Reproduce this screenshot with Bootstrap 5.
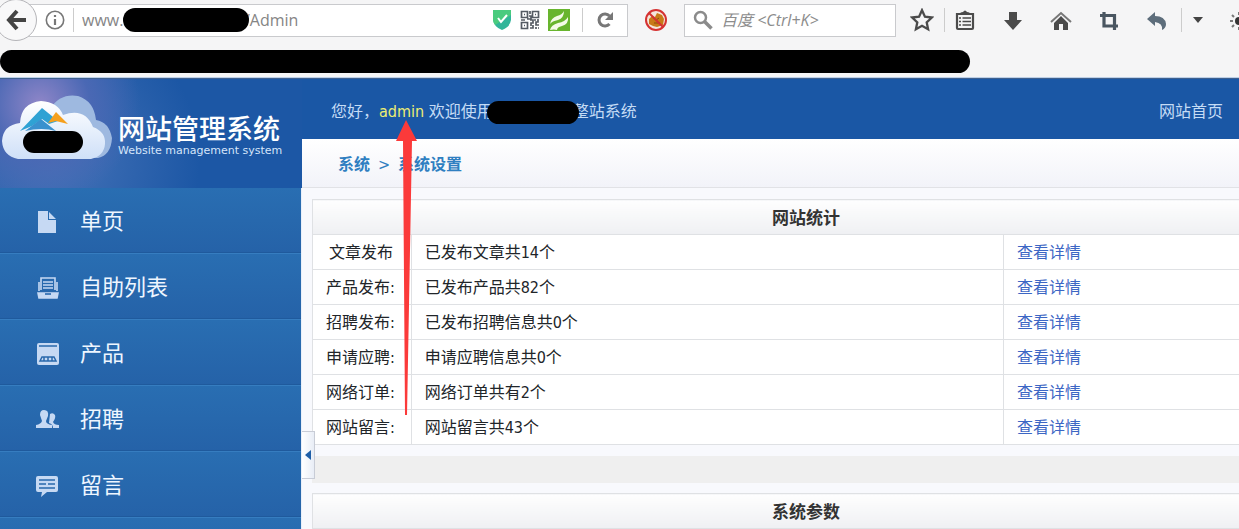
<!DOCTYPE html>
<html lang="zh-CN">
<head>
<meta charset="utf-8">
<meta name="viewport" content="width=device-width, initial-scale=1">
<title>网站管理系统</title>
<link href="https://cdn.jsdelivr.net/npm/bootstrap@5.3.0/dist/css/bootstrap.min.css" rel="stylesheet">
<style>
body{font:16px/24px "DejaVu Sans Condensed","Noto Sans CJK SC",sans-serif;color:#111;background:#f8f9fd}
button{background:none;border:0;padding:0}
.browser{background:#f5f5f6;height:79px;border-bottom:1px solid #3f608e;box-shadow:inset 0 -1px #bdd0e8;font-family:"Open Sans","Noto Sans CJK SC",sans-serif}
.toolrow{height:40px}
.back-btn{width:42px;height:42px;margin-left:-5px;border:1px solid #b4b4b8;border-radius:50%;background:#f8f8f9;z-index:2}
.field{height:33px;background:#fff;border:1px solid #c9cacd}
.urlbox{margin-left:-17px;padding-left:24px}
.field input{border:0;outline:0;background:none;color:#858585;min-width:0;padding:0;line-height:24px}
.field input::placeholder{color:#8c8c8c;opacity:1;font-style:italic}
.sep{width:1px;height:24px;background:#ccc}
.searchbox{width:212px;padding-left:8px}
.w56{width:56px}.w48{width:48px}.w44{width:44px}.w40{width:40px}.w32{width:32px}.w25{width:25px;padding-left:15px}
.tool{padding-bottom:2px}
.blob{background:#000;border-radius:12px}
.url-blob{left:41px;top:0;width:126px;height:24px}
.bar-blob{width:78.3%;height:23px;margin-top:10px}
.word-blob{width:92px;height:23px;margin:0 -6px;vertical-align:middle;position:relative}
.sidebar{width:302px;background:#2565aa;border-right:1px solid #e8effa}
.brandbox{height:109px;margin-right:-1px;background:radial-gradient(circle at 40px 25px,#8f86c8 0,#4a68b4 50px,transparent 100px),radial-gradient(circle at 50px 80px,#4673b8,transparent 150px),#1c57a5}
.brand-title{font-size:27px;line-height:30px;font-weight:500;color:#fff}
.brand-sub{font:11px/11px "DejaVu Sans",sans-serif;color:#d5e5fa}
.menu-link{height:66px;padding:2px 0 0 35px;gap:20px;font-size:22px;color:#eef6ff;text-decoration:none;background:linear-gradient(#296eb2,#2562a8);border-bottom:1px solid #367dc0;box-shadow:inset 0 -1px #1f5a9d}
.topbar{height:60px;background:#1a57a5;color:#c5dcf5;padding:6px 16px 0 29px}
.topbar a{color:#c5dcf5}
.user{color:#eeee72}
.pointer{left:50%;top:18px;margin-left:-6px;z-index:5;pointer-events:none}
.crumbs{height:49px;padding:4px 0 0 36px;gap:8px;font-weight:700;color:#2f7fc1;background:linear-gradient(#fff,#f2f3f9);border-bottom:1px solid #e1e2e6}
.crumbs a{color:inherit}
.content-area{padding:11px 0 0 10px;margin-right:-61px}
.grid-table{border:1px solid #dfe1e4;background:#fff;table-layout:fixed;margin:0}
.grid-table th,.grid-table td{border:1px solid #dfe1e4;height:35px;padding:2px 13px 0;line-height:24px;vertical-align:middle}
.grid-table thead th{text-align:center;font-size:17px;color:#333;background:linear-gradient(#fefefe,#eff0f3)}
.grid-table tbody th{font-weight:400;white-space:nowrap;padding:2px 0 0 13px}
.grid-table a{color:#3c66c4}
.c1{width:10%}.c2{width:60%}.c3{width:30%}.c4{width:26%}
.divide{height:27px;margin:11px 0 10px;background:#efefef}
.handle{left:0;top:352px;width:13px;height:48px;border:1px solid #c8ccd6;border-left:0;background:linear-gradient(90deg,#fff,#e8edf6)}
</style>
</head>
<body class="vh-100 overflow-hidden d-flex flex-column">
<header class="browser flex-shrink-0">
 <div class="toolrow d-flex align-items-center">
  <button class="back-btn d-flex align-items-center justify-content-center flex-shrink-0" aria-label="后退"><svg width="22" height="22" viewBox="0 0 22 22" fill="none" stroke="#444" stroke-width="4"><path d="M12 2 4 11l8 9M4 11h17"/></svg></button>
  <div class="field urlbox d-flex align-items-center flex-grow-1 position-relative">
   <svg width="20" height="20" viewBox="0 0 20 20" fill="none" stroke="#777" stroke-width="1.6"><circle cx="10" cy="10" r="8.7"/><path d="M10 9v6M10 5v2" stroke-width="2.2"/></svg>
   <span class="sep ms-2"></span>
   <div class="position-relative flex-grow-1 d-flex ms-2"><input class="w-100" aria-label="网址" value="www.&nbsp;&nbsp;&nbsp;&nbsp;&nbsp;&nbsp;&nbsp;&nbsp;&nbsp;&nbsp;&nbsp;&nbsp;&nbsp;&nbsp;&nbsp;&nbsp;&nbsp;&nbsp;&nbsp;&nbsp;&nbsp;&nbsp;&nbsp;&nbsp;&nbsp;&nbsp;&nbsp;&nbsp;&nbsp;/Admin"><span class="blob position-absolute url-blob"></span></div>
   <button class="me-2" aria-label="安全"><svg class="d-block" width="20" height="22" viewBox="0 0 20 22"><path d="M1 1h18v10q-1 7-9 10Q2 18 1 11z" fill="#32b59a"/><path d="M1 1h18v5L3 16Q1 13 1 11z" fill="#4acb7e"/><path d="m6 9 3 4 6-7" fill="none" stroke="#fff" stroke-width="2"/></svg></button>
   <button class="me-2" aria-label="二维码"><svg class="d-block" width="20" height="20" viewBox="0 0 20 20" fill="none" stroke="#555b63" stroke-width="1.7"><path d="M1.500 1.500h6v6h-6zM12.500 1.500h6v6h-6zM1.500 12.500h6v6h-6zM4 4.500h1M15 4.500h1M4 15.500h1M10 1v3M9 6h2v3H7M1 10h4M10 10h3v3h-2v3M14 10h2M18 9v3h-2v3h3M10 18h3v-3M16 17v2M18 18h1"/></svg></button>
   <button class="me-2" aria-label="加速"><svg class="d-block" width="22" height="22" viewBox="0 0 22 22"><path d="M0 0h22v22H0z" fill="#68b52e"/><path d="M2 15Q3 9 9 7q5-1 7-5 0 7-6 9-6 1-8 4zm0 6q1-5 8-7 7-1 10-6 1 7-6 9-5 1-5 4-3-1-7 0z" fill="#f4fbe8"/></svg></button>
   <span class="sep ms-1"></span>
   <button class="px-2 ms-1 me-1" aria-label="刷新"><svg class="d-block" width="20" height="20" viewBox="0 0 20 20"><path d="M14.500 14a6 6 0 1 1 0-8" fill="none" stroke="#777" stroke-width="3"/><path d="M18 2v8h-8z" fill="#777"/></svg></button>
  </div>
  <button class="w56 tool flex-shrink-0" aria-label="拦截"><svg width="24" height="24" viewBox="0 0 24 24"><circle cx="12" cy="12" r="10" fill="#f5e5dc"/><path d="m5 11 3-3 3 1 2-4 5 2 2 4-1 6-6 2-4-1-4-2z" fill="#c87a18"/><path d="m9 10 3 2 3-2M10 15h6" stroke="#8c4a0c" fill="none"/><circle cx="12" cy="12" r="10" fill="none" stroke="#d53232" stroke-width="2"/><path d="m5 5 14 14" stroke="#d53232" stroke-width="2"/></svg></button>
  <div class="field searchbox d-flex align-items-center flex-shrink-0"><svg class="flex-shrink-0" width="20" height="20" viewBox="0 0 20 20" fill="none" stroke="#8b8b8b"><circle cx="7.500" cy="7.500" r="5.500" stroke-width="2.500"/><path d="m11.500 11.500 7 7" stroke-width="3.500"/></svg><input class="flex-grow-1 ms-2" aria-label="搜索" placeholder="百度 &lt;Ctrl+K&gt;"></div>
  <button class="w44 tool ms-1 flex-shrink-0" aria-label="收藏"><svg width="24" height="24" viewBox="0 0 22 22"><path d="m11 2 2.700 6 6.300.7-4.700 4.400 1.300 6.400-5.600-3.200-5.600 3.200 1.300-6.400L2 8.700 8.300 8z" fill="none" stroke="#4b4b4b" stroke-width="2.100"/></svg></button>
  <span class="sep flex-shrink-0"></span>
  <button class="w40 tool flex-shrink-0" aria-label="书签"><svg width="20" height="22" viewBox="0 0 20 22"><path d="M2 5h16v14q0 1-1 1H3q-1 0-1-1z" fill="none" stroke="#4b4b4b" stroke-width="2.200"/><path d="M5 5q0-2 3-2 2-3 4 0 3 0 3 2z" fill="#4b4b4b"/><path d="M4 9h2m1.500 0H16M4 12.500h2m1.500 0H16M4 16h2m1.500 0H16" stroke="#4b4b4b" stroke-width="1.700"/></svg></button>
  <button class="w48 tool ms-1 flex-shrink-0" aria-label="下载"><svg width="20" height="20" viewBox="0 0 20 20"><path d="M6 1h8v8h5l-9 10L1 9h5z" fill="#4b4b4b"/></svg></button>
  <button class="w48 tool flex-shrink-0" aria-label="主页"><svg width="22" height="20" viewBox="0 0 22 20"><path d="m1 11 10-9 10 9" fill="none" stroke="#777" stroke-width="2"/><path d="m4 12 7-7 7 7v7h-5v-6H9v6H4z" fill="#4b4b4b"/></svg></button>
  <button class="w48 tool flex-shrink-0" aria-label="截图"><svg width="20" height="20" viewBox="0 0 20 20" fill="none" stroke="#4a5661" stroke-width="3.200"><path d="M5 1v14h14M1 4.500h14.500V19"/></svg></button>
  <button class="w48 tool flex-shrink-0" aria-label="撤销"><svg width="22" height="20" viewBox="0 0 22 20"><path d="M1 8 9 1v4q10 0 11 8 0 4-4 6 1-7-7-8v4z" fill="#5d6d7b"/></svg></button>
  <span class="sep flex-shrink-0"></span>
  <button class="w32 flex-shrink-0" aria-label="更多"><svg class="d-block mx-auto" width="12" height="8" viewBox="0 0 12 8"><path d="M1 1h10L6 7z" fill="#444"/></svg></button>
  <button class="w25 tool flex-shrink-0 overflow-hidden" aria-label="设置"><svg width="20" height="20" viewBox="0 0 20 20" stroke="#777" stroke-width="2"><circle cx="10" cy="10" r="4" fill="#333" stroke="none"/><path d="M10 1v3M1 10h3M3 4l2 2M3 16l2-2M10 16v3"/></svg></button>
 </div>
 <div class="blob bar-blob"></div>
</header>
<div class="d-flex flex-grow-1 overflow-hidden">
 <aside class="sidebar flex-shrink-0">
  <div class="brandbox d-flex position-relative">
   <svg class="flex-shrink-0" width="118" height="109" viewBox="0 0 118 109"><defs><linearGradient id="cl" x2="0" y2="1"><stop stop-color="#fff"/><stop offset="1" stop-color="#cfe0f8"/></linearGradient></defs><path d="M50 30Q60 14 78 17q16 5 18 24 13 2 16 18-1 17-14 20H50z" fill="#9eb9e0"/><path d="M18 80Q3 77 2 62 3 46 20 44q1-20 21-22 17 1 22 14 22-8 30 12 13 5 12 17-1 12-14 15z" fill="url(#cl)"/><path d="m20 52 22-23 16 13-9 3-7-5-10 7z" fill="#2fa2d4"/><path d="m48 44 8-11 12 12-12-3z" fill="#f5a01e"/><path d="m25 52 16-12 15 12q-14-4-31 0z" fill="#3a91ce"/><rect x="23" y="52" width="60" height="22" rx="11"/></svg>
   <div class="pt-4 mt-2"><div class="brand-title pt-1">网站管理系统</div><div class="brand-sub">Website management system</div></div>
  </div>
  <nav>
   <a class="menu-link d-flex align-items-center" href="#"><svg width="25" height="24" viewBox="0 0 25 24"><path d="M3 1h10v9h8v13H3zM14 2l7 7h-7z" fill="#c6d9f3"/></svg>单页</a>
   <a class="menu-link d-flex align-items-center" href="#"><svg width="25" height="24" viewBox="0 0 25 24" fill="none" stroke="#c6d9f3" stroke-width="1.600"><path d="M6 14V2h14v12M4 15V6M22 15V6M8 6h10M8 9h10M8 12h10"/><path d="M3 17h20l-1 5H4z" fill="#c6d9f3"/><path d="M10 18h6" stroke="#2868ac"/></svg>自助列表</a>
   <a class="menu-link d-flex align-items-center" href="#"><svg width="25" height="24" viewBox="0 0 25 24"><rect x="2" y="1" width="22" height="22" rx="2" fill="#c6d9f3"/><path d="M4 4h18M5 19l2-4h12l2 4zM9 15v4M13 15v4M17 15v4" stroke="#2868ac" fill="none" stroke-width="1.500"/></svg>产品</a>
   <a class="menu-link d-flex align-items-center" href="#"><svg width="25" height="24" viewBox="0 0 25 24" fill="#c6d9f3"><path d="M5 7q0-5 4-5 5 0 4 6l-2 5q0 3 6 4v3H1v-3q5-1 6-4zM15 6q3-2 5 1 1 3-2 7 1 3 6 3v3h-6q0-4-4-5z"/></svg>招聘</a>
   <a class="menu-link d-flex align-items-center" href="#"><svg width="25" height="24" viewBox="0 0 25 24"><path d="M3 2h18q2 0 2 2v12q0 2-2 2h-9l-6 5 1-5H3q-2 0-2-2V4q0-2 2-2z" fill="#c6d9f3"/><path d="M4 6h16M4 10h7m2 0h7M4 14h16" stroke="#2868ac" stroke-width="1.500"/></svg>留言</a>
   <a class="menu-link d-flex align-items-center" href="#" aria-label="更多栏目"></a>
  </nav>
 </aside>
 <main class="flex-grow-1 position-relative" style="min-width:0">
  <div class="topbar d-flex align-items-center justify-content-between">
   <div class="text-nowrap">您好，<span class="user position-relative">admin<svg class="pointer position-absolute" width="22" height="296" viewBox="0 0 22 296"><path d="M10 0 21 21h-5L11 295H9L7 21H0z" fill="#fb3a3a"/></svg></span> 欢迎使用<span class="blob word-blob d-inline-block"></span>整站系统</div>
   <a class="text-decoration-none" href="#">网站首页</a>
  </div>
  <nav class="crumbs d-flex align-items-center"><a class="text-decoration-none" href="#">系统</a><span class="fw-normal">&gt;</span><span>系统设置</span></nav>
  <div class="content-area">
   <table class="table grid-table">
    <colgroup><col class="c1"><col class="c2"><col class="c3"></colgroup>
    <thead><tr><th colspan="3">网站统计</th></tr></thead>
    <tbody>
     <tr><th class="ps-3">文章发布</th><td>已发布文章共14个</td><td><a class="text-decoration-none" href="#">查看详情</a></td></tr>
     <tr><th>产品发布:</th><td>已发布产品共82个</td><td><a class="text-decoration-none" href="#">查看详情</a></td></tr>
     <tr><th>招聘发布:</th><td>已发布招聘信息共0个</td><td><a class="text-decoration-none" href="#">查看详情</a></td></tr>
     <tr><th>申请应聘:</th><td>申请应聘信息共0个</td><td><a class="text-decoration-none" href="#">查看详情</a></td></tr>
     <tr><th>网络订单:</th><td>网络订单共有2个</td><td><a class="text-decoration-none" href="#">查看详情</a></td></tr>
     <tr><th>网站留言:</th><td>网站留言共43个</td><td><a class="text-decoration-none" href="#">查看详情</a></td></tr>
    </tbody>
   </table>
   <div class="divide"></div>
   <table class="table grid-table">
    <colgroup><col class="c4"><col></colgroup>
    <thead><tr><th colspan="2">系统参数</th></tr></thead>
    <tbody><tr><td></td><td></td></tr></tbody>
   </table>
  </div>
  <button class="handle position-absolute d-flex align-items-center justify-content-center" aria-label="收起菜单"><svg width="6" height="10" viewBox="0 0 6 10"><path d="M6 0v10L0 5z" fill="#1f5fa8"/></svg></button>
 </main>
</div>
<script src="https://cdn.jsdelivr.net/npm/bootstrap@5.3.0/dist/js/bootstrap.bundle.min.js"></script>
</body>
</html>
